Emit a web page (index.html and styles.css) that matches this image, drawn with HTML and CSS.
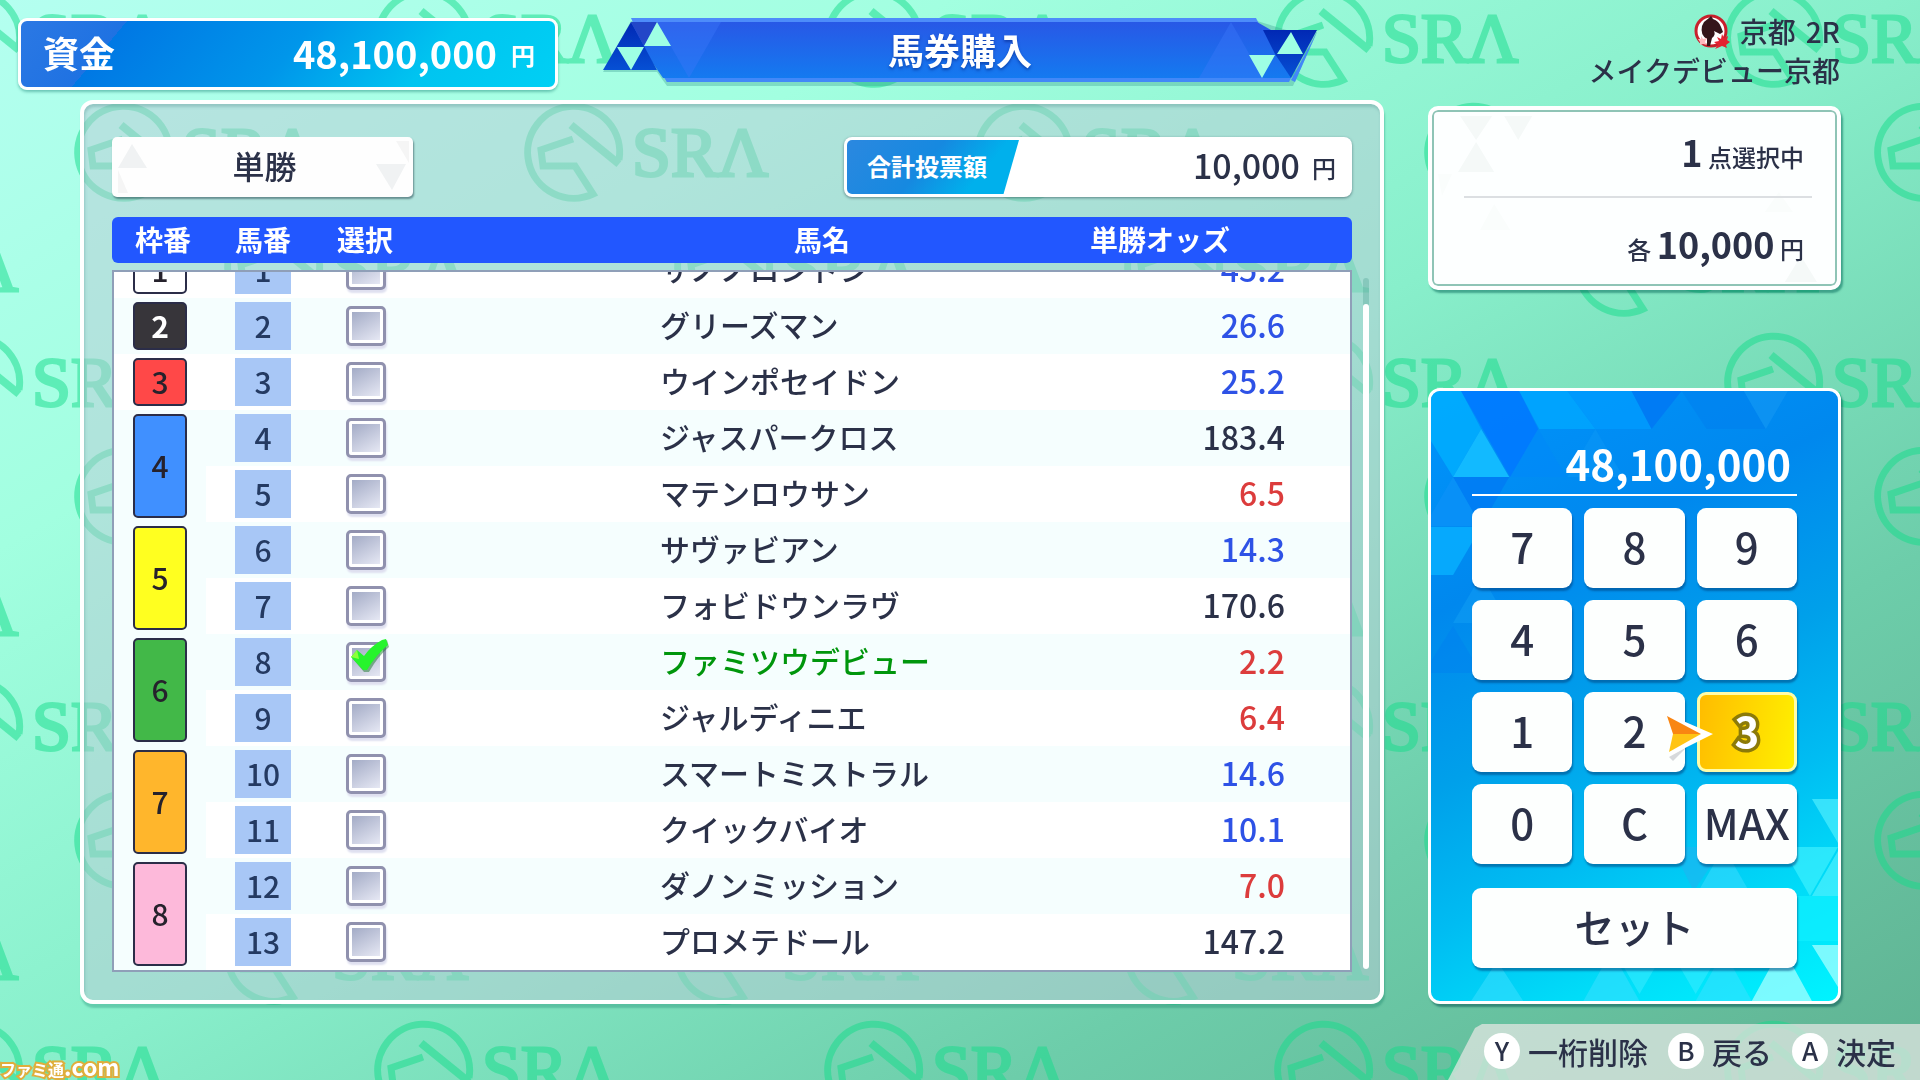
FILE: index.html
```html
<!DOCTYPE html>
<html lang="ja">
<head>
  <meta charset="UTF-8" />
  <meta name="viewport" content="width=device-width, initial-scale=1.0" />
  <title>馬券購入</title>
  <link rel="stylesheet" href="styles.css">
</head>
<body>
  <svg class="backdrop" aria-hidden="true">
    <defs>
      <g id="sra">
        <path d="M48 8 A46 46 0 1 0 22 42 L4 14 H-28 L-30 -2 L2 -13" fill="none" stroke-width="7" />
        <path d="M48 12 L0 -27" fill="none" stroke-width="8" />
        <text x="61" y="24" class="sra-text">SRΛ</text>
      </g>
      <pattern id="sra-pattern" width="450" height="344" patternUnits="userSpaceOnUse" patternTransform="translate(-29 0)">
        <use href="#sra" x="0" y="38" />
        <use href="#sra" x="450" y="38" />
        <use href="#sra" x="0" y="382" />
        <use href="#sra" x="450" y="382" />
        <use href="#sra" x="150" y="152" />
        <use href="#sra" x="300" y="267" />
        <use href="#sra" x="-150" y="267" />
      </pattern>
    </defs>
    <rect width="100%" height="100%" fill="url(#sra-pattern)" />
  </svg>

  <header class="top-bar">
    <div class="funds">
      <span class="funds-label">資金</span>
      <span class="funds-value">48,100,000</span>
      <span class="funds-unit">円</span>
    </div>

    <div class="title-banner">
      <svg viewBox="0 0 714 68" aria-hidden="true">
        <defs>
          <linearGradient id="banner" x1="0" y1="0" x2="0" y2="1">
            <stop offset="0" stop-color="#2858e6" />
            <stop offset="1" stop-color="#147af0" />
          </linearGradient>
          <linearGradient id="dark" x1="0" y1="0" x2="0" y2="1">
            <stop offset="0" stop-color="#0128b4" />
            <stop offset="1" stop-color="#0650d4" />
          </linearGradient>
        </defs>
        <path d="M28 3 H654 L690 14 H714 L690 68 H64 L54 54 H0 Z" fill="#3a9a90" opacity=".35" />
        <path d="M28 0 H653 L686 64 H64 L40 28 Z" fill="#4d8cfa" />
        <path d="M28 4 H654 L668 12 H700 L688 60 H60 L38 28 Z" fill="url(#banner)" />
        <path d="M54 4 H118 L86 60 Z" fill="#3b78fa" opacity=".4" />
        <path d="M596 60 L628 4 L660 60 Z" fill="#3b78fa" opacity=".4" />
        <path d="M28 4 L14 28 L0 52 H54 L41 28 L28 4 Z" fill="url(#dark)" />
        <path d="M28 4 H54 L41 28 Z" fill="#2347c8" />
        <path d="M54 4 L68 28 H41 Z M14 29 H41 L28 52 Z" fill="#9effe4" />
        <path d="M660 12 H714 L688 60 L672 36 Z" fill="url(#dark)" />
        <path d="M688 14 L700 36 H674 Z M646 37 H672 L659 60 Z" fill="#9effe4" />
        <path d="M688 62 L714 14 L692 64 Z M688 60 L686 64 H64 L62 60 Z" fill="#4288f8" />
      </svg>
      <h1>馬券購入</h1>
    </div>

    <div class="race-info">
      <div class="race-place">
        <svg class="emblem" viewBox="0 0 36 36" aria-hidden="true">
          <circle cx="17" cy="17" r="15" fill="#fff" stroke="#c8202c" stroke-width="3" />
          <path d="M10 8 L15 4 L17 2 L19 5 Q25 7 27 13 L29 18 L26 20 L20 17 Q22 21 18 24 L16 32 H13 V25 Q6 21 8 12 Z" fill="#35151a" />
          <path d="M7 22 l2 3 4-1-2 4 2 3-4-1-3 1v-3l-2-3 3 0z" fill="#ffb9be" />
          <path d="M28 20 L30 24 L34 22 L33 26 L36 28 L32 31 L33 34 L28 32 L21 35 L24 31 L20 28 L25 27 L23 23 L27 25 Z" fill="#e32331" />
        </svg>
        <span>京都</span>
        <span>2R</span>
      </div>
      <div>メイクデビュー京都</div>
    </div>
  </header>

  <main class="layout">
    <section class="panel">
      <div class="panel-top">
        <div class="bet-type">
          <svg viewBox="0 0 301 60" preserveAspectRatio="none" aria-hidden="true">
            <path d="M20 7 L35 31 H6 Z M264 27 H294 L280 53 Z" fill="#f0f2f3" />
            <path d="M6 33 L16 56 H6 Z M284 4 H297 V26 Z" fill="#f5f5f5" />
          </svg>
          <select aria-label="券種">
            <option>単勝</option>
          </select>
        </div>
        <div class="total">
          <span class="total-label">合計投票額</span>
          <span class="total-value">10,000</span>
          <span class="total-unit">円</span>
        </div>
      </div>

      <div class="list-head">
        <table>
          <thead>
            <tr>
              <th class="col-frame">枠番</th>
              <th class="col-number">馬番</th>
              <th class="col-select">選択</th>
              <th class="col-name">馬名</th>
              <th class="col-odds">単勝オッズ</th>
            </tr>
          </thead>
        </table>
      </div>

      <div class="list-body">
        <table>
          <colgroup>
            <col class="col-frame"><col class="col-number"><col class="col-select"><col class="col-name"><col class="col-odds">
          </colgroup>
          <tbody>
            <tr>
              <td><span class="frame f1">1</span></td>
              <td><span class="num">1</span></td>
              <td class="sel"><input type="checkbox" aria-label="1番"></td>
              <td class="name">サノノロンドン</td>
              <td class="odds mid">45.2</td>
            </tr>
            <tr>
              <td><span class="frame f2">2</span></td>
              <td><span class="num">2</span></td>
              <td class="sel"><input type="checkbox" aria-label="2番"></td>
              <td class="name">グリーズマン</td>
              <td class="odds mid">26.6</td>
            </tr>
            <tr>
              <td><span class="frame f3">3</span></td>
              <td><span class="num">3</span></td>
              <td class="sel"><input type="checkbox" aria-label="3番"></td>
              <td class="name">ウインポセイドン</td>
              <td class="odds mid">25.2</td>
            </tr>
            <tr>
              <td rowspan="2"><span class="frame double f4">4</span></td>
              <td><span class="num">4</span></td>
              <td class="sel"><input type="checkbox" aria-label="4番"></td>
              <td class="name">ジャスパークロス</td>
              <td class="odds">183.4</td>
            </tr>
            <tr>
              <td><span class="num">5</span></td>
              <td class="sel"><input type="checkbox" aria-label="5番"></td>
              <td class="name">マテンロウサン</td>
              <td class="odds low">6.5</td>
            </tr>
            <tr>
              <td rowspan="2"><span class="frame double f5">5</span></td>
              <td><span class="num">6</span></td>
              <td class="sel"><input type="checkbox" aria-label="6番"></td>
              <td class="name">サヴァビアン</td>
              <td class="odds mid">14.3</td>
            </tr>
            <tr>
              <td><span class="num">7</span></td>
              <td class="sel"><input type="checkbox" aria-label="7番"></td>
              <td class="name">フォビドウンラヴ</td>
              <td class="odds">170.6</td>
            </tr>
            <tr>
              <td rowspan="2"><span class="frame double f6">6</span></td>
              <td><span class="num">8</span></td>
              <td class="sel">
                <span class="check-wrap">
                  <input type="checkbox" aria-label="8番" checked>
                  <svg class="tick" viewBox="0 0 40 34" aria-hidden="true">
                    <path d="M3 20 L9 14 L15 19 Q22 8 33 3 L37 1 L39 8 Q28 17 19 33 H14 Z" fill="#1c7a2c" opacity=".5" />
                    <path d="M1 18 L7 11 L14 17 Q21 7 32 1 L36 0 L38 6 Q26 16 17 31 H13 Z" fill="#26f42c" />
                    <path d="M1 18 L7 11 L9 20 Z" fill="#8cff3c" />
                  </svg>
                </span>
              </td>
              <td class="name picked">ファミツウデビュー</td>
              <td class="odds low">2.2</td>
            </tr>
            <tr>
              <td><span class="num">9</span></td>
              <td class="sel"><input type="checkbox" aria-label="9番"></td>
              <td class="name">ジャルディニエ</td>
              <td class="odds low">6.4</td>
            </tr>
            <tr>
              <td rowspan="2"><span class="frame double f7">7</span></td>
              <td><span class="num">10</span></td>
              <td class="sel"><input type="checkbox" aria-label="10番"></td>
              <td class="name">スマートミストラル</td>
              <td class="odds mid">14.6</td>
            </tr>
            <tr>
              <td><span class="num">11</span></td>
              <td class="sel"><input type="checkbox" aria-label="11番"></td>
              <td class="name">クイックバイオ</td>
              <td class="odds mid">10.1</td>
            </tr>
            <tr>
              <td rowspan="2"><span class="frame double f8">8</span></td>
              <td><span class="num">12</span></td>
              <td class="sel"><input type="checkbox" aria-label="12番"></td>
              <td class="name">ダノンミッション</td>
              <td class="odds low">7.0</td>
            </tr>
            <tr>
              <td><span class="num">13</span></td>
              <td class="sel"><input type="checkbox" aria-label="13番"></td>
              <td class="name">プロメテドール</td>
              <td class="odds">147.2</td>
            </tr>
          </tbody>
        </table>
      </div>
      <div class="scrollbar"><div class="scroll-thumb"></div></div>
    </section>

    <aside class="side">
      <section class="summary">
        <svg class="summary-deco" viewBox="0 0 400 172" preserveAspectRatio="none" aria-hidden="true">
          <path d="M26 4 H58 L42 28 Z M70 4 H98 L84 28 Z M42 30 L60 60 H24 Z M350 170 L366 144 L382 170 Z" fill="#f5f9f8" />
          <path d="M4 62 H18 L8 84 Z M60 92 L76 118 H46 Z M344 80 L358 100 H330 Z" fill="#fafdfc" />
        </svg>
        <p class="summary-line"><b>1</b> 点選択中</p>
        <p class="summary-line">各 <b>10,000</b> 円</p>
      </section>

      <section class="keypad">
        <svg class="keypad-deco" viewBox="0 0 406 610" preserveAspectRatio="none" aria-hidden="true">
          <path d="M0 0 H30 L50 38 L22 86 L0 50 Z" fill="#00b4ff" opacity=".7" />
          <path d="M30 0 H88 L107 38 L79 86 Z" fill="#0078ff" opacity=".85" />
          <path d="M50 38 L78 86 H22 Z" fill="#12baff" />
          <path d="M88 0 H136 L164 38 H108 Z" fill="#00a8ff" opacity=".8" />
          <path d="M136 0 H200 L220 38 H164 Z" fill="#009cff" opacity=".7" />
          <path d="M200 0 H250 L220 38 Z" fill="#0074f4" opacity=".7" />
          <path d="M250 0 H312 L334 38 H275 Z" fill="#0080ee" opacity=".6" />
          <path d="M312 0 H356 L334 38 Z" fill="#1498f4" opacity=".6" />
          <path d="M107 38 L135 86 H79 Z" fill="#0088f8" opacity=".6" />
          <path d="M164 38 L192 86 H136 Z" fill="#0c98f6" opacity=".5" />
          <path d="M22 86 H78 L50 135 Z" fill="#0078f4" opacity=".7" />
          <path d="M22 86 L50 135 H0 V124 Z" fill="#0c92f8" opacity=".7" />
          <path d="M0 136 H50 L22 184 H0 Z" fill="#08b0ff" opacity=".8" />
          <path d="M22 235 L50 282 H0 V270 Z" fill="#007cf0" opacity=".4" />
          <path d="M50 184 L78 232 H22 Z" fill="#16a4f4" opacity=".4" />
          <path d="M240 456 H292 L262 500 Z" fill="#20b4f0" opacity=".6" />
          <path d="M292 456 L320 505 H264 Z" fill="#40dcff" opacity=".5" />
          <path d="M380 408 H406 V452 Z M380 505 L406 460 V505 Z" fill="#5cf4ff" opacity=".6" />
          <path d="M350 456 H406 L378 505 Z" fill="#48f4ff" opacity=".6" />
          <path d="M320 505 H406 V550 H350 Z" fill="#10f0ff" opacity=".7" />
          <path d="M380 554 H406 V596 Z M350 555 L380 610 H320 Z" fill="#a4ffff" opacity=".75" />
          <path d="M180 555 H236 L208 603 Z M236 555 H292 L264 603 Z" fill="#40ecff" opacity=".5" />
          <path d="M66 570 L92 610 H40 Z M180 560 L208 610 H152 Z M292 560 L320 610 H264 Z" fill="#40e0ff" opacity=".5" />
        </svg>
        <output class="keypad-value">48,100,000</output>
        <div class="keys">
          <button>7</button>
          <button>8</button>
          <button>9</button>
          <button>4</button>
          <button>5</button>
          <button>6</button>
          <button>1</button>
          <button>2</button>
          <button class="active">3
            <svg class="cursor" viewBox="0 0 48 48" aria-hidden="true">
              <path d="M2 43 L20 33 L6 47 Z" fill="#667" opacity=".25" />
              <path d="M0 0 L46 20 L2 42 L5 21 Z" fill="#fff" />
              <path d="M0 2 L34 20 L6 20 Z" fill="#f98612" />
              <path d="M6 20 H34 L2 38 Z" fill="#ffc414" />
            </svg>
          </button>
          <button>0</button>
          <button>C</button>
          <button>MAX</button>
        </div>
        <button class="set-btn">セット</button>
      </section>
    </aside>
  </main>

  <footer class="bottom-bar">
    <div class="credit">ファミ通<span>.com</span></div>
    <div class="guide">
      <span class="guide-item"><kbd>Y</kbd>一桁削除</span>
      <span class="guide-item"><kbd>B</kbd>戻る</span>
      <span class="guide-item"><kbd>A</kbd>決定</span>
    </div>
  </footer>
</body>
</html>
```
FILE: styles.css
```css
* {
  box-sizing: border-box;
}

body {
  margin: 0;
  height: 100vh;
  min-height: 720px;
  display: flex;
  flex-direction: column;
  overflow: hidden;
  font-family: "Noto Sans CJK JP", "Noto Sans", sans-serif;
  font-weight: 500;
  color: #2b3148;
  background: linear-gradient(150deg, #b4fff0 0%, #a2ffe0 25%, #88efcb 50%, #6dcdaa 76%, #5fb292 100%);
}

button, select, input {
  font-family: inherit;
  font-weight: inherit;
  color: inherit;
  margin: 0;
}

.backdrop {
  position: fixed;
  top: 0;
  left: 0;
  width: 100%;
  height: 100%;
  z-index: -1;
}

#sra {
  stroke: #14dc8a;
  fill: #14dc8a;
  opacity: 0.5;
}

.sra-text {
  font-family: "Liberation Serif", serif;
  font-size: 70px;
  stroke-width: 3px;
}

/* top bar */

.top-bar {
  display: grid;
  grid-template-columns: 1fr auto 1fr;
  height: 100px;
  padding: 18px 18px 0;
  flex-shrink: 0;
}

.funds {
  display: flex;
  align-items: center;
  width: 540px;
  height: 72px;
  padding: 0 20px 4px 22px;
  border: 3px solid #fff;
  border-radius: 9px;
  color: #fff;
  font-weight: 700;
  background: linear-gradient(130deg, #2b78e4 0, #1f72e2 18%, #0078e4 18%, #0096ea 50%, #00c4f0 75%, #00d0f4 100%);
  box-shadow: 0 2px 3px rgba(0, 110, 100, 0.4);
}

.funds-label {
  font-size: 36px;
  flex: 1;
}

.funds-value {
  font-size: 38px;
}

.funds-unit {
  font-size: 24px;
  margin-left: 14px;
  padding-top: 4px;
}

.title-banner {
  position: relative;
  width: 714px;
  height: 68px;
}

.title-banner svg {
  position: absolute;
  inset: 0;
}

.title-banner h1 {
  position: relative;
  margin: 0;
  font-size: 36px;
  line-height: 62px;
  text-align: center;
  color: #fff;
  text-shadow: 0 2px 3px rgba(0, 30, 120, 0.5);
}

.race-info {
  padding-right: 62px;
  font-size: 28px;
  line-height: 39px;
  margin-top: -6px;
  text-align: right;
}

.race-place {
  display: flex;
  justify-content: flex-end;
  align-items: center;
  gap: 10px;
}

.emblem {
  width: 36px;
  height: 36px;
}

/* main */

.layout {
  flex: 1;
  min-height: 0;
  display: flex;
  gap: 44px;
  padding: 0 79px 0 80px;
}

.panel {
  flex: 1;
  min-width: 0;
  display: grid;
  grid-template-columns: 1fr 6px;
  grid-template-rows: 60px 66px 1fr;
  column-gap: 11px;
  padding: 33px 11px 28px 28px;
  border: 4px solid #fff;
  border-radius: 13px;
  background: rgba(188, 204, 214, 0.52);
  box-shadow: 1px 4px 2px rgba(0, 110, 90, 0.28), inset 1px 3px 3px rgba(70, 130, 130, 0.3);
}

.panel-top {
  grid-column: 1;
  display: flex;
  justify-content: space-between;
}

.bet-type {
  position: relative;
  width: 301px;
  height: 60px;
  border-radius: 5px;
  background: #fefefe;
  box-shadow: 1px 2px 2px rgba(40, 70, 80, 0.55);
}

.bet-type svg {
  position: absolute;
  inset: 0;
  width: 100%;
  height: 100%;
}

.bet-type select {
  position: relative;
  appearance: none;
  width: 100%;
  height: 60px;
  padding: 0 0 4px 4px;
  border: none;
  background: none;
  font-size: 32px;
  text-align: center;
  text-align-last: center;
}

.total {
  display: flex;
  align-items: center;
  width: 508px;
  height: 60px;
  padding: 3px 16px 3px 3px;
  border-radius: 8px;
  background: #fff;
  box-shadow: 0 1px 3px rgba(40, 70, 80, 0.6);
}

.total-label {
  width: 172px;
  height: 54px;
  padding-left: 20px;
  border-radius: 5px 0 0 5px;
  font-size: 24px;
  line-height: 52px;
  font-weight: 700;
  color: #fff;
  background: linear-gradient(130deg, #2b88e0 0, #1689e0 45%, #00b0ec 75%);
  clip-path: polygon(0 0, 100% 0, 91% 100%, 0 100%);
}

.total-value {
  flex: 1;
  text-align: right;
  font-size: 34px;
  line-height: 50px;
  padding-bottom: 4px;
}

.total-unit {
  font-size: 24px;
  margin-left: 12px;
}

/* horse list */

table {
  width: 100%;
  table-layout: fixed;
  border-collapse: collapse;
}

th, td {
  padding: 0;
}

.col-frame {
  width: 92px;
}

.col-number {
  width: 114px;
}

.col-select {
  width: 340px;
}

.col-odds {
  width: 366px;
}

.list-head {
  grid-column: 1;
  grid-row: 2;
  margin-top: 20px;
  height: 46px;
  padding: 0 2px;
  border-radius: 6px;
  color: #fff;
  font-size: 28px;
  line-height: 44px;
  background: #2257ff;
}

.list-head .col-frame {
  padding-left: 6px;
}

.list-head .col-select {
  padding-right: 250px;
}

.list-head .col-odds {
  padding-right: 14px;
}

.list-body {
  grid-column: 1;
  grid-row: 3;
  margin-top: 7px;
  min-height: 0;
  display: flex;
  align-items: flex-end;
  overflow: hidden;
  border: 2px solid #8f9fb8;
  background: #fff;
}

.list-body tr {
  height: 56px;
}

.list-body tr:nth-child(even) {
  background: #f5fefe;
}

.list-body td {
  height: 56px;
  font-size: 30px;
  line-height: 44px;
  text-align: center;
}

.frame {
  display: block;
  width: 54px;
  height: 48px;
  margin: 0 auto;
  border: 2px solid #2b2d48;
  border-radius: 5px;
  line-height: 42px;
  color: #26222c;
}

.frame.double {
  height: 104px;
  line-height: 98px;
}

.f1 { background: #fff; }
.f2 { background: #37353a; color: #fff; font-weight: 700; }
.f3 { background: #ff4848; }
.f4 { background: #4090ff; }
.f5 { background: #ffff20; }
.f6 { background: #42b848; }
.f7 { background: #ffb62c; }
.f8 { background: #fdb9da; }

.num {
  display: block;
  width: 56px;
  height: 48px;
  margin: 0 auto;
  line-height: 46px;
  color: #243a62;
  background: #a8c7f6;
}

.list-body .sel {
  padding-right: 248px;
  line-height: 0;
}

.sel input {
  appearance: none;
  width: 40px;
  height: 40px;
  padding: 3px;
  border: 3px solid #9091ae;
  border-radius: 5px;
  background: linear-gradient(150deg, #a3abc6, #e6e8f4) content-box, #fff;
  box-shadow: 1px 3px 2px #dfe0f0;
}

.check-wrap {
  position: relative;
  display: inline-block;
}

.tick {
  position: absolute;
  left: 4px;
  top: -3px;
  width: 40px;
  height: 34px;
  pointer-events: none;
}

.list-body .name {
  padding-bottom: 4px;
  text-align: left;
}

.list-body .picked {
  color: #00960c;
}

.list-body .odds {
  padding: 0 65px 4px 0;
  font-size: 32px;
  text-align: right;
}

.list-body .mid {
  color: #2e52e6;
}

.list-body .low {
  color: #dc3c3c;
}

.scrollbar {
  grid-column: 2;
  grid-row: 3;
  margin: 15px 0 3px;
  padding-top: 26px;
  border-radius: 3px;
  background: rgba(80, 160, 145, 0.35);
}

.scroll-thumb {
  height: 100%;
  border-radius: 3px;
  background: #fff;
}

/* right side */

.side {
  width: 413px;
  display: flex;
  flex-direction: column;
  justify-content: space-between;
  padding-top: 6px;
}

.summary {
  position: relative;
  height: 184px;
  padding: 4px 25px 4px 32px;
  border: 4px solid #fff;
  border-radius: 10px;
  background: #fdffff;
  box-shadow: 2px 3px 2px rgba(0, 100, 85, 0.5), inset 0 0 0 2px #8fc4b6;
}

.summary-deco {
  position: absolute;
  left: 2px;
  top: 2px;
  width: calc(100% - 4px);
  height: calc(100% - 4px);
}

.summary-line {
  position: relative;
  margin: 0;
  padding-right: 8px;
  height: 82px;
  line-height: 74px;
  font-size: 24px;
  text-align: right;
}

.summary-line + .summary-line {
  border-top: 2px solid #dcdfe2;
  line-height: 90px;
}

.summary-line b {
  font-size: 36px;
}

.keypad {
  position: relative;
  height: 616px;
  padding: 48px 41px 34px;
  border: 3px solid #fff;
  border-radius: 12px;
  overflow: hidden;
  background: linear-gradient(155deg, #0094fc 0%, #0088ee 28%, #00a0ea 50%, #00bcf2 68%, #00dcf8 84%, #00f4ff 100%);
  box-shadow: 2px 3px 2px rgba(0, 80, 80, 0.5);
}

.keypad-deco {
  position: absolute;
  inset: 0;
  width: 100%;
  height: 100%;
}

.keypad-value {
  position: relative;
  display: block;
  height: 57px;
  padding-right: 6px;
  border-bottom: 2px solid #fff;
  font-size: 42px;
  line-height: 48px;
  font-weight: 700;
  text-align: right;
  color: #fff;
}

.keys {
  position: relative;
  display: grid;
  grid-template-columns: repeat(3, 1fr);
  gap: 12px;
  margin: 12px 0 24px;
}

.keypad button {
  position: relative;
  height: 80px;
  padding: 0 0 4px;
  border: none;
  border-radius: 9px;
  font-size: 42px;
  line-height: 76px;
  background: #fdfffe;
  box-shadow: 1px 3px 2px rgba(0, 60, 120, 0.5);
}

.keypad .active {
  border: 3px solid #fffca8;
  line-height: 70px;
  font-weight: 700;
  color: #fff;
  background: linear-gradient(100deg, #ffbc00, #fff000);
  -webkit-text-stroke: 7px #8c7a08;
  paint-order: stroke fill;
}

.cursor {
  position: absolute;
  left: -33px;
  top: 19px;
  width: 48px;
  height: 48px;
}

.keypad .set-btn {
  width: 100%;
  font-size: 40px;
}

/* bottom bar */

.bottom-bar {
  display: flex;
  justify-content: space-between;
  align-items: flex-end;
  height: 56px;
  margin-top: 20px;
  flex-shrink: 0;
}

.credit {
  font-size: 16px;
  line-height: 22px;
  font-weight: 700;
  color: #fff;
  -webkit-text-stroke: 4px #dfae3c;
  paint-order: stroke fill;
}

.credit span {
  font-size: 23px;
}

.guide {
  display: flex;
  align-items: center;
  gap: 20px;
  height: 56px;
  padding: 0 24px 0 36px;
  background: rgba(225, 230, 225, 0.75);
  clip-path: polygon(34px 0, 100% 0, 100% 100%, 0 100%, 27px 4px);
}

.guide-item {
  display: flex;
  align-items: center;
  gap: 8px;
  font-size: 30px;
  line-height: 44px;
  padding-bottom: 2px;
}

.guide kbd {
  width: 36px;
  height: 36px;
  border-radius: 50%;
  font-family: inherit;
  font-size: 26px;
  line-height: 34px;
  text-align: center;
  background: #fff;
}
```
